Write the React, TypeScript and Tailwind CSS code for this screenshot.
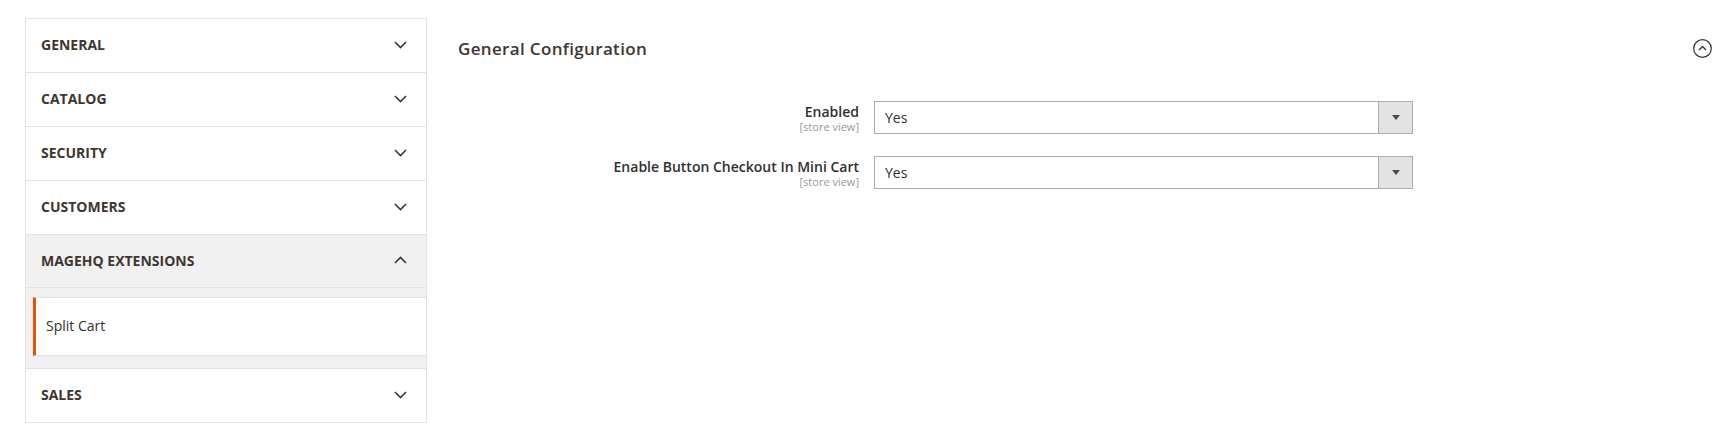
import React from "react";

const font = { fontFamily: '"Open Sans", "Noto Sans", sans-serif' };

function Chevron({ up = false }: { up?: boolean }) {
  return (
    <svg width="13" height="8" viewBox="0 0 13 8" className="shrink-0">
      <polyline
        points={up ? "1,7 6.5,1.5 12,7" : "1,1 6.5,6.5 12,1"}
        fill="none"
        stroke="#41362f"
        strokeWidth="1.6"
      />
    </svg>
  );
}

function NavRow({ title, up = false, grey = false, h = "h-[54px]" }: { title: string; up?: boolean; grey?: boolean; h?: string }) {
  return (
    <div
      className={`flex ${h} items-center justify-between border-b border-[#e3e3e3] pb-[2px] pl-[15px] pr-[19px] ${
        grey ? "bg-[#f1f1f1]" : "bg-white"
      }`}
    >
      <span className="text-[14px] font-bold uppercase text-[#41362f]">{title}</span>
      <Chevron up={up} />
    </div>
  );
}

function SelectBox() {
  return (
    <div className="flex h-[33px] w-[539px] items-stretch border border-[#adadad] bg-white">
      <div className="flex flex-1 items-center pl-[10px] text-[14px] text-[#303030]">Yes</div>
      <div className="flex w-[34px] items-center justify-center border-l border-[#adadad] bg-[#e3e3e3]">
        <svg width="8" height="5" viewBox="0 0 8 5">
          <polygon points="0,0 8,0 4,5" fill="#514943" />
        </svg>
      </div>
    </div>
  );
}

function Field({ label }: { label: string }) {
  return (
    <div className="flex items-start">
      <div className="flex w-[401px] flex-col items-end pt-[2px] text-right">
        <span className="text-[14px] font-semibold leading-[17px] text-[#303030]">{label}</span>
        <span className="text-[11px] leading-[14px] text-[#999999]">[store view]</span>
      </div>
      <div className="ml-[15px]">
        <SelectBox />
      </div>
    </div>
  );
}

export default function App() {
  return (
    <div className="flex h-[425px] w-full overflow-hidden bg-white" style={font}>
      <div className="ml-[25px] mt-[18px] w-[402px] shrink-0">
        <div className="border-x border-t border-[#e3e3e3]">
          <NavRow title="General" />
          <NavRow title="Catalog" />
          <NavRow title="Security" />
          <NavRow title="Customers" />
          <NavRow title="MageHQ Extensions" up grey h="h-[53px]" />
          <div className="bg-[#f1f1f1] pb-[12px] pt-[9px]">
            <div className="ml-[7px] flex h-[59px] items-center border-y border-[#e3e3e3] border-l-[3px] border-l-[#eb5202] bg-white pb-[2px] pl-[10px]">
              <span className="text-[14px] text-[#303030]">Split Cart</span>
            </div>
          </div>
          <div className="border-t border-[#e3e3e3]">
            <NavRow title="Sales" />
          </div>
        </div>
      </div>
      <div className="ml-[31px] mt-[36px] flex-1 pr-[19px]">
        <div className="flex items-center justify-between">
          <h2 className="text-[17px] font-semibold tracking-[0.02em] text-[#41362f]">General Configuration</h2>
          <svg width="19" height="19" viewBox="0 0 19 19">
            <circle cx="9.5" cy="9.5" r="8.8" fill="none" stroke="#303030" strokeWidth="1.2" />
            <polyline points="6,11 9.5,7.5 13,11" fill="none" stroke="#303030" strokeWidth="1.3" />
          </svg>
        </div>
        <div className="mt-[39px] flex flex-col gap-[22px]">
          <Field label="Enabled" />
          <Field label="Enable Button Checkout In Mini Cart" />
        </div>
      </div>
    </div>
  );
}
